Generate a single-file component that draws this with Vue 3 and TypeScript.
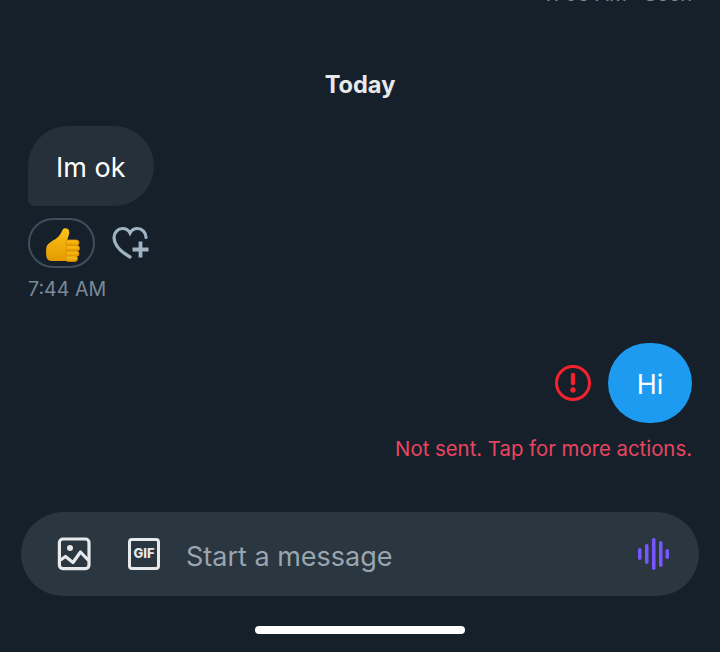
<script setup lang="ts">
const waveBars = [
  { x: 1, h: 12 },
  { x: 8, h: 20 },
  { x: 15, h: 32 },
  { x: 22, h: 26 },
  { x: 28.5, h: 10 },
]

const fingers = [
  { y: 12, w: 13.5 },
  { y: 17.5, w: 14 },
  { y: 23, w: 13.5 },
  { y: 28, w: 12 },
]
</script>

<template>
  <div class="screen">
    <div class="thread">
      <div class="seen">11:56 AM · Seen</div>
      <div class="day">Today</div>

      <div class="incoming">
        <div class="bubble-in">Im ok</div>
        <div class="reactions">
          <div class="reaction-pill">
            <svg class="thumb" width="34" height="34" viewBox="0 0 34 34">
              <defs>
                <linearGradient id="thumb-fill" x1="0" y1="0" x2="0" y2="1">
                  <stop offset="0" stop-color="#fcc21b" />
                  <stop offset="1" stop-color="#e59a00" />
                </linearGradient>
              </defs>
              <path d="M18 .5c3-.8 5.500 1 5.300 4-.2 2.500-1.300 4.800-2 7.500v21H6c-3.500 0-5.500-2-5.700-5-.3-3.500-.3-6.500.2-9 .5-2.500 2.500-4 5-5.500 4-2.500 7-4 9.500-8.500C16 3.500 16.300 1 18 .5z" fill="url(#thumb-fill)" />
              <rect
                v-for="f in fingers"
                :key="f.y"
                x="19.500"
                :y="f.y"
                :width="f.w"
                height="5.500"
                rx="2.700"
                fill="url(#thumb-fill)"
                stroke="#d98e00"
                stroke-width="0.800"
              />
            </svg>
          </div>
          <svg class="add-reaction" width="38" height="34" viewBox="0 0 38 34" fill="none" stroke="#9fb3c2" stroke-width="3.200">
            <path d="M18 31C11 27 2 20 2 11.500 2 6.500 6 2.500 10.500 2.500c3.500 0 6 1.700 7.500 4.500 1.500-2.800 4-4.500 7.500-4.500 4.500 0 8.500 4 8.500 9" stroke-linecap="round" />
            <path d="M28.500 15.500v16M20.500 23.500h16" stroke-width="3.800" />
          </svg>
        </div>
        <div class="time">7:44 AM</div>
      </div>

      <div class="outgoing">
        <div class="out-row">
          <svg width="36" height="36" viewBox="0 0 36 36">
            <circle cx="18" cy="18" r="16.500" fill="none" stroke="#f4212e" stroke-width="3" />
            <path d="M18 10v8" stroke="#f4212e" stroke-width="4.400" stroke-linecap="round" />
            <circle cx="18" cy="25" r="2.700" fill="#f4212e" />
          </svg>
          <div class="bubble-out">Hi</div>
        </div>
        <div class="not-sent">Not sent. Tap for more actions.</div>
      </div>
    </div>

    <div class="composer">
      <svg class="tool" width="34" height="34" viewBox="0 0 34 34" fill="none" stroke="#e7e9ea" stroke-width="3.200">
        <rect x="2.400" y="2" width="29.600" height="29.600" rx="3.500" />
        <path d="M3.500 23l5-3.500 7.500 6 7.500-10.500 8 8.500" stroke-linejoin="round" />
        <circle cx="13" cy="11" r="3" fill="#e7e9ea" stroke="none" />
      </svg>
      <div class="gif">GIF</div>
      <div class="placeholder">Start a message</div>
      <svg class="wave" width="32" height="32" viewBox="0 0 32 32">
        <rect
          v-for="bar in waveBars"
          :key="bar.x"
          :x="bar.x"
          :y="16 - bar.h / 2"
          width="3.500"
          :height="bar.h"
          rx="1.750"
          fill="#7856ff"
        />
      </svg>
    </div>

    <div class="home-wrap">
      <div class="home-pill"></div>
    </div>
  </div>
</template>

<style scoped>
.screen {
  width: 720px;
  height: 652px;
  overflow: hidden;
  background: #16202b;
  font-family: Inter, "Liberation Sans", sans-serif;
  display: flex;
  flex-direction: column;
}

.thread {
  flex: 1;
  min-height: 0;
  padding: 0 28px;
  display: flex;
  flex-direction: column;
}

.seen {
  margin-top: -19px;
  height: 26px;
  line-height: 26px;
  text-align: right;
  font-size: 20px;
  color: #7a8a97;
}

.day {
  margin-top: 65px;
  height: 26px;
  line-height: 26px;
  text-align: center;
  font-size: 23.6px;
  font-weight: 700;
  color: #e7e9ea;
}

.incoming {
  margin-top: 28px;
  display: flex;
  flex-direction: column;
  align-items: flex-start;
}

.bubble-in {
  width: 126px;
  height: 80px;
  box-sizing: border-box;
  padding-left: 28px;
  line-height: 84px;
  font-size: 27px;
  color: #fff;
  background: #25303a;
  border-radius: 40px 40px 40px 6px;
}

.reactions {
  margin-top: 12px;
  display: flex;
  align-items: center;
  gap: 17px;
}

.reaction-pill {
  width: 67px;
  height: 50px;
  box-sizing: border-box;
  border: 2px solid #3e4f5c;
  border-radius: 25px;
  padding: 3px 0 0 2px;
  display: flex;
  align-items: center;
  justify-content: center;
}

.thumb {
  display: block;
}

.add-reaction {
  display: block;
}

.time {
  margin-top: 8px;
  line-height: 26px;
  font-size: 19.6px;
  color: #7a8a97;
}

.outgoing {
  margin-top: 41px;
  display: flex;
  flex-direction: column;
  align-items: flex-end;
}

.out-row {
  display: flex;
  align-items: center;
  gap: 17px;
}

.bubble-out {
  width: 84px;
  height: 80px;
  border-radius: 40px;
  background: #1d9bf0;
  color: #fff;
  font-size: 27px;
  line-height: 84px;
  text-align: center;
}

.not-sent {
  margin-top: 13px;
  line-height: 26px;
  font-size: 20.35px;
  color: #ea4560;
}

.composer {
  margin: 0 21px;
  height: 84px;
  flex-shrink: 0;
  background: #2a3640;
  border-radius: 42px;
  display: flex;
  align-items: center;
  padding: 0 30px 0 36px;
}

.tool {
  flex-shrink: 0;
}

.gif {
  margin-left: 37px;
  width: 32px;
  height: 32px;
  box-sizing: border-box;
  border: 3.5px solid #e7e9ea;
  border-radius: 4px;
  color: #e7e9ea;
  font-size: 13px;
  font-weight: 800;
  line-height: 25px;
  text-align: center;
  flex-shrink: 0;
}

.placeholder {
  flex: 1;
  margin-left: 26px;
  padding-top: 4px;
  font-size: 27px;
  color: #9aa5b0;
}

.wave {
  display: block;
  flex-shrink: 0;
}

.home-wrap {
  height: 56px;
  flex-shrink: 0;
  display: flex;
  justify-content: center;
  padding-top: 30px;
  box-sizing: border-box;
}

.home-pill {
  width: 210px;
  height: 8px;
  border-radius: 4px;
  background: #fff;
}
</style>
